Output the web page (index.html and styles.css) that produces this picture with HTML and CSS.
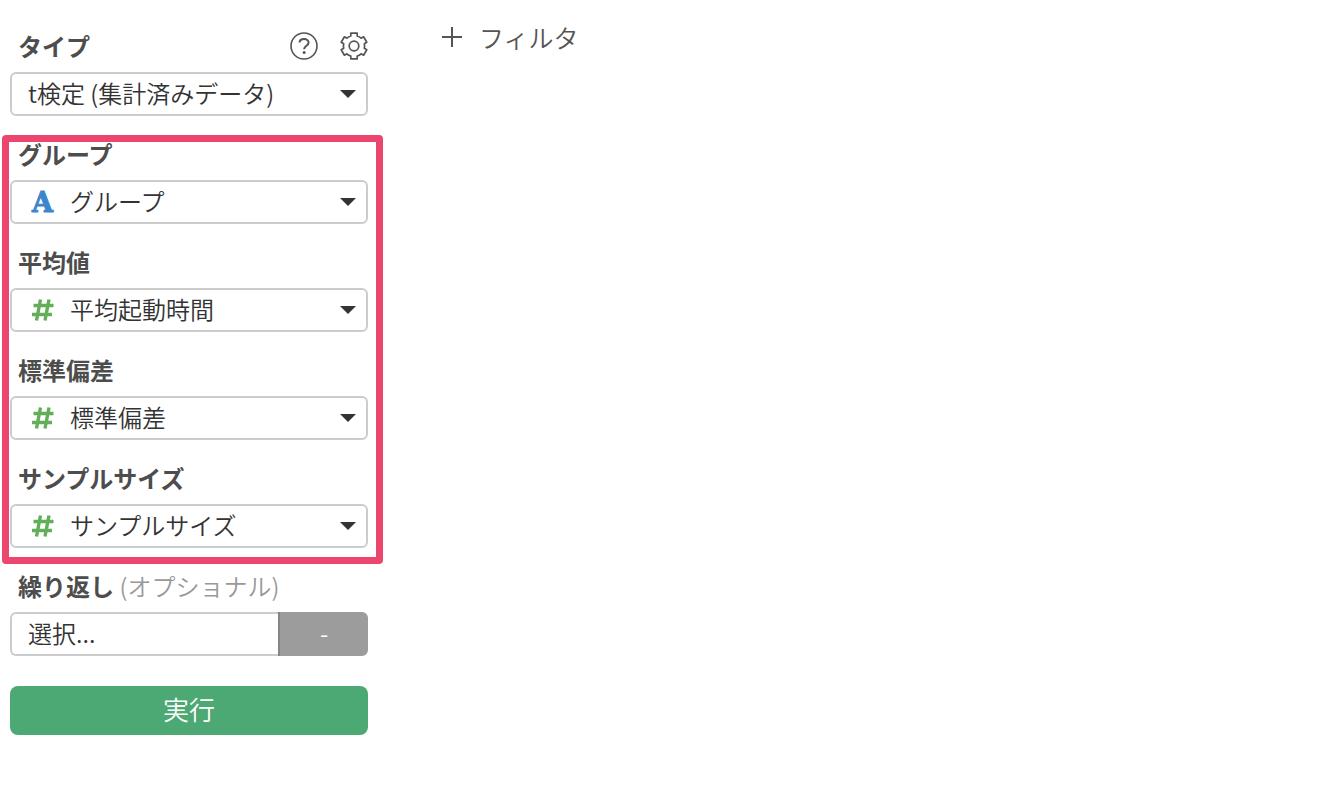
FILE: index.html
```html
<!DOCTYPE html>
<html lang="ja">
<head>
  <meta charset="UTF-8" />
  <meta name="viewport" content="width=device-width, initial-scale=1.0" />
  <title>t検定</title>
  <link rel="stylesheet" href="styles.css">
</head>
<body>
  <svg class="defs" aria-hidden="true">
    <symbol id="hash" viewBox="0 0 22 22">
      <path d="M8.500 .5 4.500 21.500M17 .5l-4 21M1.500 6.500h20M0 15.500h20" fill="none" stroke="currentColor" stroke-width="3.400"/>
    </symbol>
    <symbol id="caret" viewBox="0 0 16 8">
      <path d="M0 0h16L8 8z" fill="currentColor"/>
    </symbol>
  </svg>

  <div class="layout">
    <form class="sidebar">
      <div class="field">
        <div class="label-row">
          <label for="type">タイプ</label>
          <div class="tools">
            <button type="button" class="icon-button" aria-label="ヘルプ">
              <svg viewBox="0 0 28 28" width="28" height="28" fill="none" stroke="currentColor">
                <circle cx="14" cy="14" r="13" stroke-width="1.600"/>
                <path d="M9.500 10.500C9.700 8.200 11.500 7 14 7s4.600 1.400 4.600 3.600c0 3.200-4.500 3.200-4.500 6.700" stroke-width="2"/>
                <circle cx="14.100" cy="20.500" r="1.500" fill="currentColor" stroke="none"/>
              </svg>
            </button>
            <button type="button" class="icon-button" aria-label="設定">
              <svg viewBox="0 0 28 28" width="28" height="28" fill="none" stroke="currentColor" stroke-width="1.700" stroke-linejoin="round">
                <circle cx="14" cy="14" r="4.800"/>
                <path d="M10.800 1.200h6.400V4q2.300.6 3.900 2.200l2.500-1.400 3.200 5.500-2.500 1.500q.6 2.200 0 4.400l2.500 1.500-3.200 5.500-2.500-1.400q-1.600 1.600-3.900 2.200v2.800h-6.400V24q-2.300-.6-3.900-2.200l-2.500 1.400-3.200-5.500 2.500-1.500q-.6-2.200 0-4.400l-2.500-1.500 3.200-5.500 2.500 1.400Q8.500 4.600 10.800 4z"/>
              </svg>
            </button>
          </div>
        </div>
        <div class="select-box">
          <select id="type"><option>t検定 (集計済みデータ)</option></select>
          <svg class="caret"><use href="#caret"/></svg>
        </div>
      </div>

      <div class="highlight">
        <div class="field">
          <div class="label-row"><label for="group">グループ</label></div>
          <div class="select-box typed">
            <span class="type-icon text" aria-hidden="true">A</span>
            <select id="group"><option>グループ</option></select>
            <svg class="caret"><use href="#caret"/></svg>
          </div>
        </div>
        <div class="field">
          <div class="label-row"><label for="mean">平均値</label></div>
          <div class="select-box typed">
            <svg class="type-icon number"><use href="#hash"/></svg>
            <select id="mean"><option>平均起動時間</option></select>
            <svg class="caret"><use href="#caret"/></svg>
          </div>
        </div>
        <div class="field">
          <div class="label-row"><label for="sd">標準偏差</label></div>
          <div class="select-box typed">
            <svg class="type-icon number"><use href="#hash"/></svg>
            <select id="sd"><option>標準偏差</option></select>
            <svg class="caret"><use href="#caret"/></svg>
          </div>
        </div>
        <div class="field">
          <div class="label-row"><label for="size">サンプルサイズ</label></div>
          <div class="select-box typed">
            <svg class="type-icon number"><use href="#hash"/></svg>
            <select id="size"><option>サンプルサイズ</option></select>
            <svg class="caret"><use href="#caret"/></svg>
          </div>
        </div>
      </div>

      <div class="field">
        <div class="label-row">
          <label for="repeat">繰り返し <span class="optional">(オプショナル)</span></label>
        </div>
        <div class="split">
          <select id="repeat"><option>選択...</option></select>
          <button type="button" class="aggregate">-</button>
        </div>
      </div>

      <button type="button" class="run">実行</button>
    </form>

    <main class="content">
      <button type="button" class="filter">
        <svg viewBox="0 0 20 20" width="20" height="20" fill="none" stroke="currentColor" stroke-width="2"><path d="M10 0v20M0 10h20"/></svg>
        フィルタ
      </button>
    </main>
  </div>
</body>
</html>
```
FILE: styles.css
```css
:root {
  --text: #333;
  --label: #4d4d4d;
  --muted: #999;
  --border: #ccc;
  --pink: #ec466f;
  --green: #4ca973;
}

* {
  box-sizing: border-box;
}

body {
  margin: 0;
  background: #fff;
  color: var(--text);
  font-family: "Noto Sans CJK JP", sans-serif;
  font-size: 24px;
  font-weight: 350;
}

button, select {
  font: inherit;
  color: inherit;
  margin: 0;
  cursor: pointer;
}

.defs {
  position: absolute;
  width: 0;
  height: 0;
}

.layout {
  display: flex;
  gap: 74px;
  padding: 18px 10px;
}

.sidebar {
  flex: 0 0 358px;
  padding-top: 10px;
}

.field {
  margin-bottom: 20px;
}

.label-row {
  display: flex;
  align-items: center;
  justify-content: space-between;
  height: 36px;
  margin-bottom: 8px;
  padding-left: 8px;
}

.label-row label {
  color: var(--label);
  font-weight: 700;
  line-height: 36px;
}

.label-row .optional {
  color: var(--muted);
  font-weight: 350;
}

.tools {
  display: flex;
  gap: 22px;
}

.icon-button {
  display: flex;
  padding: 0;
  border: 0;
  background: none;
  color: #555;
}

.select-box {
  position: relative;
}

select {
  appearance: none;
  display: block;
  width: 100%;
  height: 44px;
  padding: 0 40px 4px 16px;
  border: 2px solid var(--border);
  border-radius: 6px;
  background: #fff;
}

.typed select {
  padding-left: 58px;
}

.caret {
  position: absolute;
  right: 12px;
  top: 18px;
  width: 16px;
  height: 8px;
  pointer-events: none;
}

.type-icon {
  position: absolute;
  left: 22px;
  top: 11px;
  width: 22px;
  height: 22px;
  pointer-events: none;
}

.type-icon.text {
  color: #3c86cc;
  font: 700 27px/24px "DejaVu Serif", serif;
  -webkit-text-stroke: 1px currentColor;
}

.type-icon.number {
  color: #63ae58;
}

.highlight {
  position: relative;
}

/* frame drawn around the required columns */
.highlight::after {
  content: "";
  position: absolute;
  inset: -1px -15px -16px -8px;
  border: 7px solid var(--pink);
  border-radius: 4px;
  pointer-events: none;
}

.highlight .field:last-child {
  margin-bottom: 0;
}

.highlight + .field {
  margin-top: 20px;
}

.split {
  display: flex;
}

.split select {
  flex: 1;
  border-right: 0;
  border-radius: 6px 0 0 6px;
}

.aggregate {
  width: 90px;
  padding: 0 0 4px;
  border: 0;
  border-left: 2px solid #858585;
  border-radius: 0 6px 6px 0;
  background: #9c9c9c;
  color: #fff;
}

.run {
  display: block;
  width: 100%;
  height: 49px;
  margin-top: 30px;
  padding: 0 0 4px;
  border: 0;
  border-radius: 8px;
  background: var(--green);
  color: #fff;
  font-size: 26px;
  line-height: 45px;
}

.filter {
  display: flex;
  align-items: center;
  gap: 17px;
  padding: 0;
  border: 0;
  background: none;
  color: #555;
  font-size: 25px;
  line-height: 38px;
}
```
